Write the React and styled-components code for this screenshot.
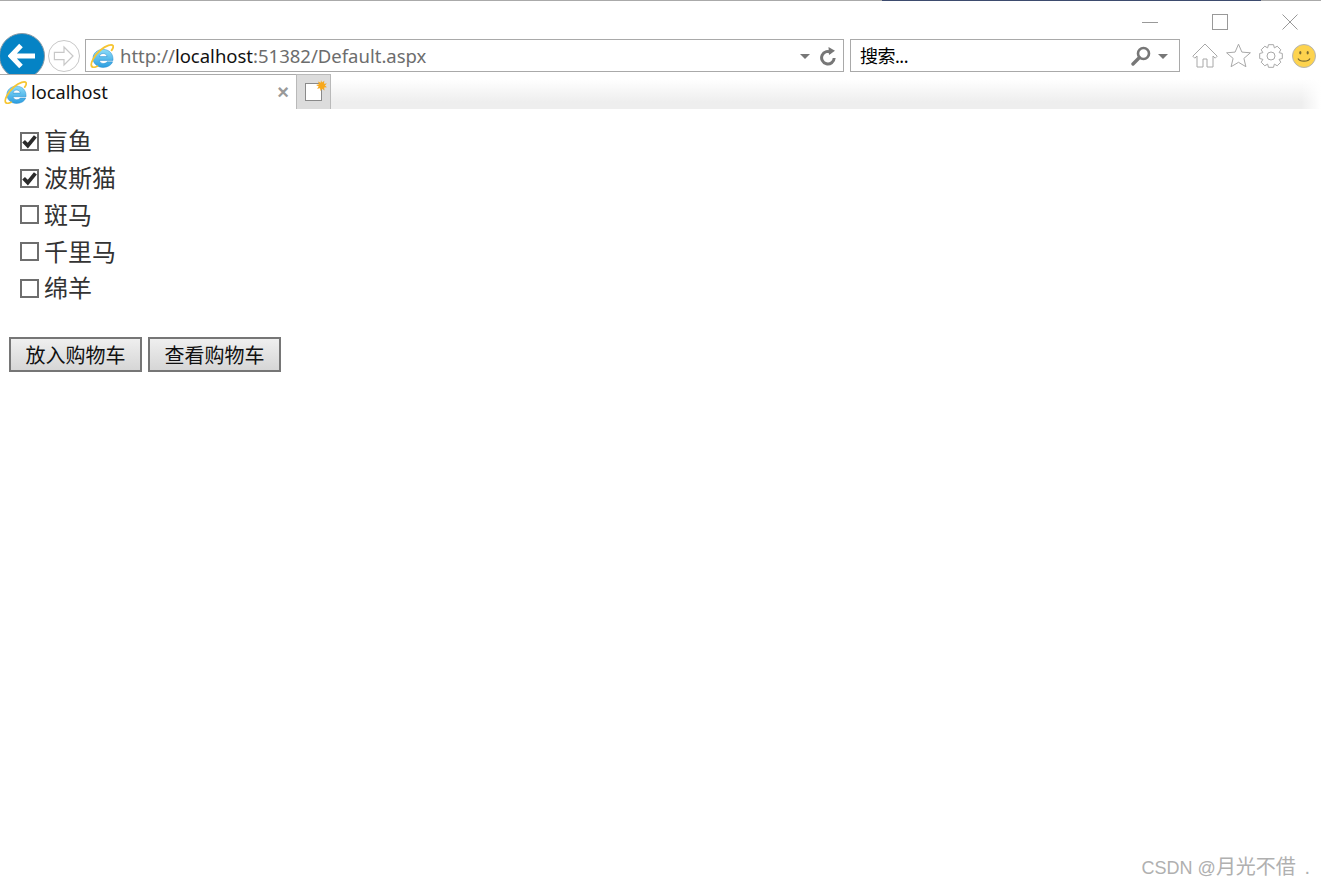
import styled, { createGlobalStyle } from 'styled-components';

const GlobalStyle = createGlobalStyle`
  html, body {
    margin: 0;
    padding: 0;
    background: #fff;
  }
  * {
    box-sizing: border-box;
  }
`;

const Page = styled.div`
  position: relative;
  width: 1321px;
  height: 886px;
  overflow: hidden;
  font-family: 'Noto Sans', 'Noto Sans CJK SC', sans-serif;
`;

const TopEdge = styled.div`
  height: 1px;
  background: linear-gradient(
    to right,
    #aaa 0,
    #aaa 882px,
    #3d4b6e 882px,
    #3d4b6e 1261px,
    #aaa 1261px
  );
`;

const WindowControls = styled.div`
  height: 38px;
  display: flex;
  justify-content: flex-end;
  align-items: center;
  gap: 54px;
  padding: 4px 23px 0 0;
`;

const AddressRow = styled.div`
  height: 33px;
  margin-bottom: 2px;
  display: flex;
  align-items: center;
`;

const BackButton = styled.div`
  width: 46px;
  height: 46px;
  margin-left: -1px;
  flex-shrink: 0;
  border-radius: 50%;
  background: #0583c5;
  border: 1px solid #8a9aa5;
  display: flex;
  align-items: center;
  justify-content: center;
`;

const ForwardButton = styled.div`
  width: 32px;
  height: 32px;
  margin-left: 3px;
  flex-shrink: 0;
  border-radius: 50%;
  border: 1px solid #c8c8c8;
  display: flex;
  align-items: center;
  justify-content: center;
`;

const InputBox = styled.div`
  height: 33px;
  width: ${(p) => p.$width}px;
  margin-left: ${(p) => p.$gap}px;
  flex-shrink: 0;
  border: 1px solid #a9a9a9;
  display: flex;
  align-items: center;
  background: #fff;
`;

const LogoSlot = styled.span`
  margin-left: 4px;
  display: flex;
  flex-shrink: 0;
`;

const AddressText = styled.div`
  margin-left: 6px;
  flex: 1;
  font-size: 18.5px;
  line-height: 30px;
  color: #6d6d6d;
  white-space: nowrap;
`;

const Host = styled.span`
  color: #111;
`;

const SearchText = styled.div`
  margin-left: 9px;
  flex: 1;
  font-size: 18px;
  letter-spacing: -0.5px;
  line-height: 30px;
  color: #000;
`;

const Caret = styled.span`
  width: 0;
  height: 0;
  flex-shrink: 0;
  margin: ${(p) => p.$margin};
  border-left: 5px solid transparent;
  border-right: 5px solid transparent;
  border-top: 5px solid #777;
`;

const Tools = styled.div`
  margin-left: 12px;
  display: flex;
  align-items: center;
  gap: 8px;
`;

const TabRow = styled.div`
  position: relative;
  z-index: 1;
  height: 35px;
  display: flex;
  background:
    linear-gradient(to right, rgba(255, 255, 255, 0), #fff) right top / 20px 100% no-repeat,
    linear-gradient(to bottom, #fff 0, #fff 5px, #eeeeee 28px, #eeeeee 100%);
`;

const Tab = styled.div`
  width: 296px;
  background: #fff;
  border-top: 1px solid #aaa;
  display: flex;
  align-items: center;
  padding: 0 7px 0 4px;
`;

const TabTitle = styled.div`
  margin-left: 4px;
  flex: 1;
  font-size: 18.2px;
  line-height: 34px;
  color: #111;
`;

const TabClose = styled.div`
  font-family: 'Liberation Sans', sans-serif;
  font-size: 20px;
  font-weight: 700;
  color: #999;
  line-height: 34px;
`;

const NewTab = styled.div`
  width: 35px;
  background: #dcdcdc;
  border: 1px solid #b9b9b9;
  border-bottom: none;
  padding: 5px 0 0 8px;
`;

const Content = styled.main`
  padding: 14px 0 0 20px;
`;

const OptionList = styled.div`
  display: flex;
  flex-direction: column;
`;

const Option = styled.div`
  height: 36.75px;
  display: flex;
  align-items: center;
  gap: 5px;
  font-family: 'Noto Sans CJK SC', sans-serif;
  font-size: 24px;
  color: #333;
`;

const OptionLabel = styled.span`
  margin-bottom: 3px;
`;

const CheckBox = styled.span`
  width: 19px;
  height: 19px;
  flex-shrink: 0;
  border: 2px solid #6e6e6e;
  background: #fff;
  display: flex;
  align-items: center;
  justify-content: center;
`;

const Actions = styled.div`
  margin: 30px 0 0 -11px;
  display: flex;
  gap: 6px;
`;

const ActionButton = styled.button`
  width: 133px;
  height: 35px;
  padding: 0;
  border: 2px solid #767676;
  background: linear-gradient(to bottom, #efefef, #d6d6d6);
  font-family: 'Noto Sans CJK SC', sans-serif;
  font-size: 20px;
  line-height: 31px;
  color: #111;
`;

const Watermark = styled.div`
  position: absolute;
  right: 11px;
  bottom: 4px;
  display: flex;
  align-items: baseline;
  font-family: 'Liberation Sans', 'Noto Sans CJK SC', sans-serif;
  font-size: 18px;
  line-height: 28px;
  color: #b0b0b0;
  white-space: pre;
`;

const WatermarkName = styled.span`
  font-size: 20px;
  word-spacing: 3px;
`;

const gearPath = (() => {
  const pts = [];
  for (let i = 0; i < 8; i++) {
    const a = (i * Math.PI) / 4;
    [
      [-0.39, 8.8],
      [-0.22, 11.6],
      [0.22, 11.6],
      [0.39, 8.8],
    ].forEach(([d, r]) => {
      pts.push(`${(12 + r * Math.sin(a + d)).toFixed(2)} ${(12 - r * Math.cos(a + d)).toFixed(2)}`);
    });
  }
  return `M${pts.join('L')}Z`;
})();

const IeLogo = ({ size }) => (
  <svg width={size} height={size} viewBox="0 0 24 24" style={{ flexShrink: 0 }}>
    <defs>
      <linearGradient id="ieBlue" x1="0" y1="0" x2="0" y2="1">
        <stop offset="0" stopColor="#8bdcf8" />
        <stop offset="1" stopColor="#2c9ee0" />
      </linearGradient>
    </defs>
    <path
      d="M3 14.2C3 9 7.6 5.4 13 5.4c5.8 0 10 3.8 10 9.8v1.2H9.4c.4 2 2 3.1 4 3.1 1.6 0 2.9-.6 3.6-1.7h5.6c-1.2 3.5-5 5.6-9.4 5.6C7.4 23.4 3 19.6 3 14.2z"
      fill="url(#ieBlue)"
      stroke="#1f86cc"
      strokeWidth="0.5"
    />
    <path d="M9.4 12.6h7.6c-.3-2-1.9-3.1-3.8-3.1s-3.4 1.1-3.8 3.1z" fill="#fff" stroke="#1f86cc" strokeWidth="0.5" />
    <path
      d="M1.8 22.4C-.2 20 4 11.6 10.6 6 16.2 1.4 21.8-.2 23 1.8c.6 1.1-.2 3-1.4 4.6"
      fill="none"
      stroke="#f6c532"
      strokeWidth="1.8"
      strokeLinecap="round"
    />
    <path d="M1.8 22.4c1 1.2 3.2 1 5.6-.2" fill="none" stroke="#f6c532" strokeWidth="1.8" strokeLinecap="round" />
  </svg>
);

const MinimizeIcon = () => (
  <svg width="16" height="16" viewBox="0 0 16 16">
    <path d="M0 8.5H16" stroke="#999" />
  </svg>
);

const MaximizeIcon = () => (
  <svg width="16" height="16" viewBox="0 0 16 16">
    <rect x="0.5" y="0.5" width="15" height="15" fill="none" stroke="#999" />
  </svg>
);

const CloseIcon = () => (
  <svg width="16" height="16" viewBox="0 0 16 16">
    <path d="M.5.5L15.5 15.5M15.5.5L.5 15.5" stroke="#999" />
  </svg>
);

const BackArrow = () => (
  <svg width="28" height="26" viewBox="0 0 28 26">
    <path d="M13 2.5L3 13l10 10.5M3 13H27" fill="none" stroke="#fff" strokeWidth="5" />
  </svg>
);

const ForwardArrow = () => (
  <svg width="24" height="22" viewBox="0 0 20 18">
    <path d="M10 1.5L17.5 9 10 16.5V12H2V6H10z" fill="none" stroke="#c8c8c8" strokeWidth="1" />
  </svg>
);

const RefreshIcon = () => (
  <svg width="18" height="20" viewBox="0 0 18 20" style={{ marginRight: 6, flexShrink: 0 }}>
    <path d="M12.6 6.6A6.3 6.3 0 1 0 15.2 12" fill="none" stroke="#777" strokeWidth="3" />
    <path d="M9.5 1L16 4.8 10 9z" fill="#777" />
  </svg>
);

const SearchIcon = () => (
  <svg width="20" height="20" viewBox="0 0 20 20" style={{ flexShrink: 0 }}>
    <circle cx="12.5" cy="7.5" r="5.5" fill="none" stroke="#777" strokeWidth="2.6" />
    <path d="M8.2 11.8L2 18" stroke="#777" strokeWidth="3.4" strokeLinecap="round" />
  </svg>
);

const HomeIcon = () => (
  <svg width="26" height="25" viewBox="0 0 26 25">
    <path
      d="M13 1L.8 13.2l2 2L5 13v11h6v-8h4v8h6V13l2.2 2.2 2-2z"
      fill="#fff"
      stroke="#a8a8a8"
      strokeLinejoin="round"
    />
  </svg>
);

const StarIcon = () => (
  <svg width="25" height="25" viewBox="0 0 25 25">
    <path
      d="M12.5 1.2l3.4 7.9 8.5.7-6.5 5.6 2 8.3-7.4-4.4-7.4 4.4 2-8.3L.6 9.8l8.5-.7z"
      fill="#fff"
      stroke="#a8a8a8"
      strokeLinejoin="round"
    />
  </svg>
);

const GearIcon = () => (
  <svg width="24" height="24" viewBox="0 0 24 24">
    <path d={gearPath} fill="#fff" stroke="#a8a8a8" strokeLinejoin="round" />
    <circle cx="12" cy="12" r="4" fill="none" stroke="#a8a8a8" />
  </svg>
);

const SmileIcon = () => (
  <svg width="24" height="24" viewBox="0 0 24 24" style={{ marginLeft: 1 }}>
    <circle cx="12" cy="12" r="11.5" fill="#fdd34e" stroke="#b5b5b5" />
    <ellipse cx="8.3" cy="8.8" rx="1.1" ry="1.7" fill="#7a6a30" />
    <ellipse cx="15.7" cy="8.8" rx="1.1" ry="1.7" fill="#7a6a30" />
    <path d="M6 14.5c1.5 3.6 10.5 3.6 12 0" fill="none" stroke="#7a6a30" strokeWidth="1.2" />
  </svg>
);

const NewTabIcon = () => (
  <svg width="22" height="22" viewBox="0 0 22 22">
    <rect x="0.5" y="3.5" width="16" height="17" fill="#fff" stroke="#8a8a8a" />
    <path
      d="M16 0l1 2.6L19.3.8l-.3 2.9 2.9-.2-2 2.1 2.1 1.6-2.9.4.4 2.9-2.3-1.7-1.6 2.3-.6-2.9-2.9.6 1.6-2.4-2.6-1.4 2.9-.8-1-2.7 2.7 1.2z"
      fill="#f7a81b"
    />
  </svg>
);

const CheckMark = () => (
  <svg width="15" height="15" viewBox="0 0 15 15">
    <path d="M1.6 7.2L5.8 11.6 13.4 2.4" fill="none" stroke="#2b2b2b" strokeWidth="3.8" />
  </svg>
);

const options = [
  { label: '盲鱼', checked: true },
  { label: '波斯猫', checked: true },
  { label: '斑马', checked: false },
  { label: '千里马', checked: false },
  { label: '绵羊', checked: false },
];

export default function App() {
  return (
    <Page>
      <GlobalStyle />
      <TopEdge />
      <WindowControls>
        <MinimizeIcon />
        <MaximizeIcon />
        <CloseIcon />
      </WindowControls>

      <AddressRow>
        <BackButton>
          <BackArrow />
        </BackButton>
        <ForwardButton>
          <ForwardArrow />
        </ForwardButton>
        <InputBox $width={759} $gap={5}>
          <LogoSlot>
            <IeLogo size={24} />
          </LogoSlot>
          <AddressText>
            http://<Host>localhost</Host>:51382/Default.aspx
          </AddressText>
          <Caret $margin="2px 9px 0 0" />
          <RefreshIcon />
        </InputBox>
        <InputBox $width={330} $gap={6}>
          <SearchText>搜索...</SearchText>
          <SearchIcon />
          <Caret $margin="2px 11px 0 7px" />
        </InputBox>
        <Tools>
          <HomeIcon />
          <StarIcon />
          <GearIcon />
          <SmileIcon />
        </Tools>
      </AddressRow>

      <TabRow>
        <Tab>
          <IeLogo size={23} />
          <TabTitle>localhost</TabTitle>
          <TabClose>×</TabClose>
        </Tab>
        <NewTab>
          <NewTabIcon />
        </NewTab>
      </TabRow>

      <Content>
        <OptionList>
          {options.map((o) => (
            <Option key={o.label}>
              <CheckBox>{o.checked && <CheckMark />}</CheckBox>
              <OptionLabel>{o.label}</OptionLabel>
            </Option>
          ))}
        </OptionList>
        <Actions>
          <ActionButton>放入购物车</ActionButton>
          <ActionButton>查看购物车</ActionButton>
        </Actions>
      </Content>

      <Watermark>
        CSDN @<WatermarkName>月光不借 .</WatermarkName>
      </Watermark>
    </Page>
  );
}
